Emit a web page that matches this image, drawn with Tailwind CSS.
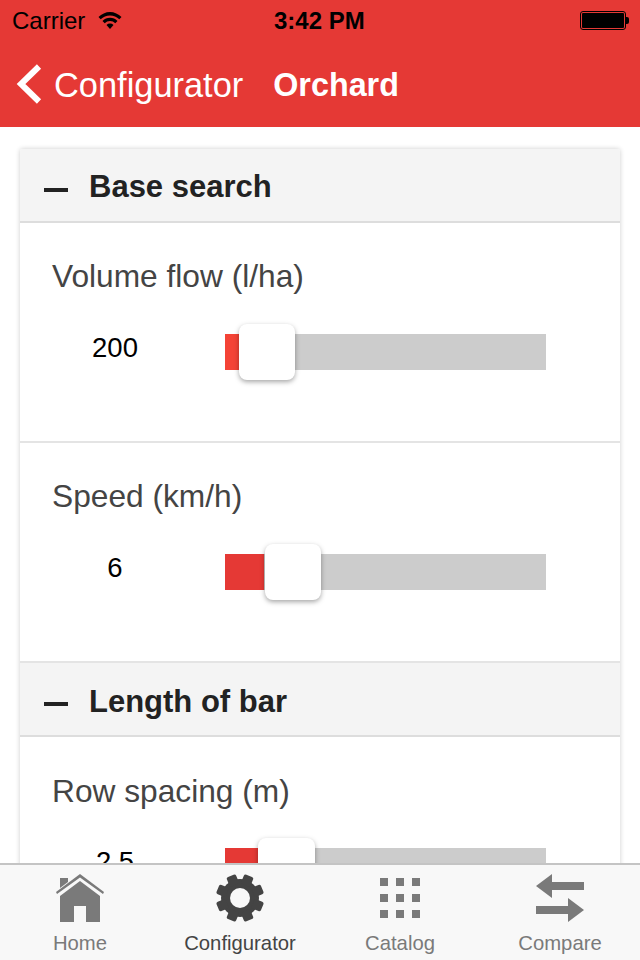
<!DOCTYPE html>
<html>
<head>
<meta charset="utf-8">
<script src="https://cdn.jsdelivr.net/npm/@tailwindcss/browser@4"></script>
</head>
<body class="m-0 bg-white">
<div class="w-[640px] h-[960px] flex flex-col overflow-hidden bg-white font-['Liberation_Sans',Arial,sans-serif]">
  <header class="h-[127px] shrink-0 bg-[#e53935] flex flex-col">
    <div class="relative h-10 pt-[2px] flex items-center justify-between text-black text-[24px] pl-3 pr-[11px]">
      <div class="flex items-center gap-[13px]">
        <span>Carrier</span>
        <svg width="24" height="18" viewBox="0 0 24 18" class="-mt-[3px]"><path d="M0.5 6 A16 16 0 0 1 23.5 6 L21.3 8.3 A13 13 0 0 0 2.7 8.3Z M4.5 10 A10.5 10.5 0 0 1 19.5 10 L17.3 12.2 A7.5 7.5 0 0 0 6.7 12.2Z M8.5 14 A5 5 0 0 1 15.5 14 L12 18Z" fill="#000"/></svg>
      </div>
      <span class="absolute left-[274px] font-bold">3:42 PM</span>
      <div class="flex items-center -mt-[2px]">
        <div class="w-[46px] h-[19px] rounded-[3px] border border-black p-px"><div class="w-full h-full bg-black rounded-[1px]"></div></div>
        <div class="w-[3px] h-[7px] bg-black rounded-r-[2px]"></div>
      </div>
    </div>
    <div class="flex items-center h-[87px] pt-[4px] text-white text-[34.4px]">
      <svg width="26" height="40" viewBox="0 0 26 40" class="ml-[16px] shrink-0 -mt-[3px]"><path d="M23 2.5 L5 20 L23 37.500" fill="none" stroke="#fff" stroke-width="6"/></svg>
      <span class="ml-[12px]">Configurator</span>
      <span class="ml-[30px] font-bold text-[32.3px]">Orchard</span>
    </div>
  </header>
  <main class="flex-1 min-h-0 overflow-hidden px-5 pt-[22px]">
    <div class="bg-white rounded-[2px] shadow-[0_0_5px_rgba(0,0,0,0.2)]">
      <div class="h-[74px] bg-[#f4f4f4] border-b-2 border-[#dddddd] flex items-center pl-6 pt-[5px] text-[#222222] text-[31px] font-semibold rounded-t-[2px]">
        <span class="w-6 h-1 bg-[#222222] mr-[21px] mt-[4px]"></span><span>Base search</span>
      </div>
      <div class="h-[220px] border-b-2 border-[#e4e4e4] px-8 pt-[32px]">
        <div class="text-[31.7px] leading-[42px] text-[#444444]">Volume flow (l/ha)</div>
        <div class="flex items-center mt-[37px]">
          <div class="w-[126px] text-center text-[27.500px] text-black -mt-[8px]">200</div>
          <div class="relative h-9 w-[321px] ml-[47px] bg-[#cccccc]">
            <div class="h-full w-[14px] bg-[#f44336]"></div>
            <div class="absolute left-[14px] -top-[10px] w-[56px] h-[56px] rounded-lg bg-white shadow-[0_2px_5px_rgba(0,0,0,0.35)]"></div>
          </div>
        </div>
      </div>
      <div class="h-[220px] border-b-2 border-[#e4e4e4] px-8 pt-[32px]">
        <div class="text-[31.7px] leading-[42px] text-[#444444]">Speed (km/h)</div>
        <div class="flex items-center mt-[37px]">
          <div class="w-[126px] text-center text-[27.500px] text-black -mt-[8px]">6</div>
          <div class="relative h-9 w-[321px] ml-[47px] bg-[#cccccc]">
            <div class="h-full w-[39px] bg-[#e53935]"></div>
            <div class="absolute left-[40px] -top-[10px] w-[56px] h-[56px] rounded-lg bg-white shadow-[0_2px_5px_rgba(0,0,0,0.35)]"></div>
          </div>
        </div>
      </div>
      <div class="h-[74px] bg-[#f4f4f4] border-b-2 border-[#dddddd] flex items-center pl-6 pt-[6px] text-[#222222] text-[31px] font-semibold">
        <span class="w-6 h-1 bg-[#222222] mr-[21px] mt-[4px]"></span><span>Length of bar</span>
      </div>
      <div class="h-[220px] px-8 pt-[33px]">
        <div class="text-[31.7px] leading-[42px] text-[#444444]">Row spacing (m)</div>
        <div class="flex items-center mt-[36px]">
          <div class="w-[126px] text-center text-[27.500px] text-black -mt-[8px]">2.5</div>
          <div class="relative h-9 w-[321px] ml-[47px] bg-[#cccccc]">
            <div class="h-full w-[33px] bg-[#e53935]"></div>
            <div class="absolute left-[33px] -top-[10px] w-[57px] h-[56px] rounded-lg bg-white shadow-[0_2px_5px_rgba(0,0,0,0.35)]"></div>
          </div>
        </div>
      </div>
    </div>
  </main>
  <nav class="relative z-10 h-[97px] shrink-0 bg-[#f8f8f8] border-t-2 border-[#c4c4c4] grid grid-cols-4 text-[20.3px] text-[#7a7a7a]">
    <div class="flex flex-col items-center">
      <svg width="48" height="48" viewBox="0 0 48 48" class="mt-[9px]" fill="#7a7a7a"><path d="M24 0 L48 18 L47 20 L24 3.500 L1 20 L0 18Z"/><path d="M4 4 H12 V8 L4 14Z"/><path d="M24 7 L44 22 V48 H30 V32 H18 V48 H4 V22Z"/></svg>
      <span class="mt-[9px] leading-6">Home</span>
    </div>
    <div class="flex flex-col items-center text-[#444444]">
      <svg width="48" height="48" viewBox="-24 -24 48 48" class="mt-[9px]" fill="#444444">
        <circle r="19"/>
        <rect x="-5" y="-24" width="10" height="10" rx="2" transform="rotate(22.5)"/>
        <rect x="-5" y="-24" width="10" height="10" rx="2" transform="rotate(67.5)"/>
        <rect x="-5" y="-24" width="10" height="10" rx="2" transform="rotate(112.5)"/>
        <rect x="-5" y="-24" width="10" height="10" rx="2" transform="rotate(157.5)"/>
        <rect x="-5" y="-24" width="10" height="10" rx="2" transform="rotate(202.5)"/>
        <rect x="-5" y="-24" width="10" height="10" rx="2" transform="rotate(247.5)"/>
        <rect x="-5" y="-24" width="10" height="10" rx="2" transform="rotate(292.5)"/>
        <rect x="-5" y="-24" width="10" height="10" rx="2" transform="rotate(337.5)"/>
        <circle r="10" fill="#f8f8f8"/>
      </svg>
      <span class="mt-[9px] leading-6">Configurator</span>
    </div>
    <div class="flex flex-col items-center">
      <div class="mt-[13px] w-10 h-10 grid grid-cols-3 gap-2">
        <div class="bg-[#7a7a7a]"></div><div class="bg-[#7a7a7a]"></div><div class="bg-[#7a7a7a]"></div>
        <div class="bg-[#7a7a7a]"></div><div class="bg-[#7a7a7a]"></div><div class="bg-[#7a7a7a]"></div>
        <div class="bg-[#7a7a7a]"></div><div class="bg-[#7a7a7a]"></div><div class="bg-[#7a7a7a]"></div>
      </div>
      <span class="mt-[13px] leading-6">Catalog</span>
    </div>
    <div class="flex flex-col items-center">
      <svg width="48" height="48" viewBox="0 0 48 48" class="mt-[9px]" fill="#7a7a7a"><path d="M0 12 L16 0 V8 H48 V16 H16 V24Z"/><path d="M48 36 L32 24 V32 H0 V40 H32 V48Z"/></svg>
      <span class="mt-[9px] leading-6">Compare</span>
    </div>
  </nav>
</div>
</body>
</html>
